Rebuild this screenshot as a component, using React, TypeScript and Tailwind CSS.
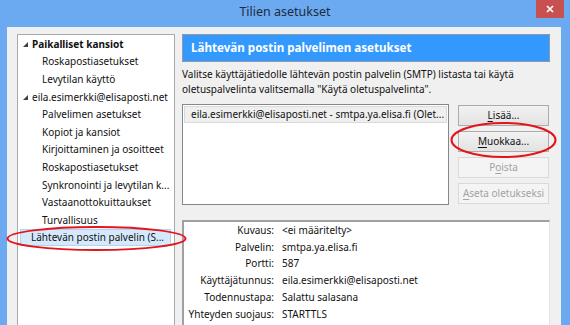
import React from 'react';

interface TreeItem {
  label: string;
  level: 0 | 1;
  bold?: boolean;
  selected?: boolean;
}

const treeItems: TreeItem[] = [
  { label: 'Paikalliset kansiot', level: 0, bold: true },
  { label: 'Roskapostiasetukset', level: 1 },
  { label: 'Levytilan käyttö', level: 1 },
  { label: 'eila.esimerkki@elisaposti.net', level: 0 },
  { label: 'Palvelimen asetukset', level: 1 },
  { label: 'Kopiot ja kansiot', level: 1 },
  { label: 'Kirjoittaminen ja osoitteet', level: 1 },
  { label: 'Roskapostiasetukset', level: 1 },
  { label: 'Synkronointi ja levytilan k...', level: 1 },
  { label: 'Vastaanottokuittaukset', level: 1 },
  { label: 'Turvallisuus', level: 1 },
  { label: 'Lähtevän postin palvelin (S...', level: 0, selected: true },
];

const details: [string, string][] = [
  ['Kuvaus:', '<ei määritelty>'],
  ['Palvelin:', 'smtpa.ya.elisa.fi'],
  ['Portti:', '587'],
  ['Käyttäjätunnus:', 'eila.esimerkki@elisaposti.net'],
  ['Todennustapa:', 'Salattu salasana'],
  ['Yhteyden suojaus:', 'STARTTLS'],
];

// expanded-node marker, the little Windows 8 corner triangle
const Triangle = () => (
  <svg width="5" height="5" viewBox="0 0 5 5" className="shrink-0">
    <polygon points="5,0 5,5 0,5" fill="#404040" />
  </svg>
);

const TreeRow: React.FC<{ item: TreeItem }> = ({ item }) => {
  if (item.selected) {
    return (
      <div className="h-[17.6px] flex items-center">
        <div className="ml-[2px] w-[151px] h-[17px] flex items-center bg-[#d6e9fc] border border-[#aed3f6] pl-[10px] whitespace-nowrap">
          {item.label}
        </div>
      </div>
    );
  }
  return (
    <div className="h-[17.6px] flex items-center whitespace-nowrap">
      {item.level === 0 ? (
        <div className="flex items-center pl-[5px] gap-[4px]">
          <Triangle />
          <span className={item.bold ? 'font-bold' : ''}>{item.label}</span>
        </div>
      ) : (
        <span className="pl-[24px]">{item.label}</span>
      )}
    </div>
  );
};

const Button: React.FC<{ label: string; u: number; disabled?: boolean }> = ({ label, u, disabled }) => (
  <div
    className={
      'h-[21px] w-[91px] flex items-center justify-center border ' +
      (disabled
        ? 'border-[#d9d9d9] bg-[#f4f4f4] text-[#a3a3a3]'
        : 'border-[#acacac] bg-gradient-to-b from-[#f2f2f2] to-[#e3e3e3] text-[#111]')
    }
  >
    <span>
      {label.slice(0, u)}
      <span className="underline underline-offset-2">{label.charAt(u)}</span>
      {label.slice(u + 1)}
    </span>
  </div>
);

export default function App() {
  return (
    <div className="w-[570px] h-[325px] overflow-hidden bg-[#6baaf1] relative text-[10px] text-[#111] font-['Noto_Sans',sans-serif]">
      {/* title bar */}
      <div className="h-[27px] flex items-center justify-center relative">
        <span className="text-[12.5px] text-[#1d2c40] -mt-[2px]">Tilien asetukset</span>
        <div className="absolute right-[6px] top-0 w-[28px] h-[18px] bg-[#c75050] flex items-center justify-center">
          <svg width="8" height="8" viewBox="0 0 8 8">
            <path d="M1 1 L7 7 M7 1 L1 7" stroke="#fff" strokeWidth="1.7" />
          </svg>
        </div>
      </div>

      <div className="ml-[7px] mr-[9px] h-[298px] bg-[#f0f0f0] flex pl-[10px] pt-[7px] pr-[11px] gap-[7px]">
        {/* account tree */}
        <div className="w-[158px] h-[320px] bg-white border border-[#a9a9a9] pt-[0.5px] shrink-0">
          {treeItems.map((item, i) => (
            <TreeRow key={i} item={item} />
          ))}
        </div>

        {/* settings pane */}
        <div className="w-[368px] flex flex-col">
          <div className="h-[28px] bg-[#3399ff] border border-[#8f9aa6] flex items-center pl-[8px]">
            <span className="text-white font-bold text-[11.6px]">Lähtevän postin palvelimen asetukset</span>
          </div>
          <div className="mt-[5px] leading-[15px] whitespace-nowrap">
            <div>Valitse käyttäjätiedolle lähtevän postin palvelin (SMTP) listasta tai käytä</div>
            <div>oletuspalvelinta valitsemalla "Käytä oletuspalvelinta".</div>
          </div>

          <div className="mt-[7px] flex gap-[9px]">
            <div className="w-[267px] h-[101px] bg-white border border-[#828790] p-[1px]">
              <div className="h-[17px] bg-[#efefef] border border-[#d9d9d9] flex items-center pl-[6px] whitespace-nowrap overflow-hidden">
                eila.esimerkki@elisaposti.net - smtpa.ya.elisa.fi (Olet...
              </div>
            </div>
            <div className="flex flex-col gap-[5px] pt-[1px]">
              <Button label="Lisää..." u={0} />
              <Button label="Muokkaa..." u={0} />
              <Button label="Poista" u={1} disabled />
              <Button label="Aseta oletukseksi" u={0} disabled />
            </div>
          </div>

          <div className="mt-[15px] flex-1 bg-white border-t-2 border-l-2 border-[#a0a0a0] border-r border-r-[#e3e3e3] whitespace-nowrap">
            {details.map(([k, v]) => (
              <div key={k} className="h-[16.8px] flex items-center">
                <span className="w-[90px] text-right">{k}</span>
                <span className="ml-[8px]">{v}</span>
              </div>
            ))}
          </div>
        </div>
      </div>

      {/* red highlight ellipses */}
      <svg className="absolute left-0 top-0 pointer-events-none" width="570" height="325">
        <ellipse cx="96.5" cy="238.5" rx="89" ry="11.5" fill="none" stroke="#e3151b" strokeWidth="2" />
        <ellipse cx="503.5" cy="140" rx="52" ry="17" fill="none" stroke="#e3151b" strokeWidth="2" />
      </svg>
    </div>
  );
}
